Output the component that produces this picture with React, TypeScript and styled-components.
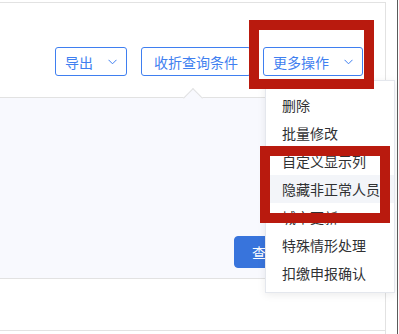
import React from "react";
import styled, { createGlobalStyle } from "styled-components";

const GlobalStyle = createGlobalStyle`
  html, body {
    margin: 0;
    padding: 0;
    background: #ffffff;
    font-family: "Noto Sans CJK SC", "Noto Sans", sans-serif;
  }
`;

const Page = styled.div`
  position: relative;
  width: 399px;
  height: 334px;
  overflow: hidden;
  padding-top: 2px;
  box-sizing: border-box;
`;

const Frame = styled.div`
  width: 386px;
  height: 332px;
  border-top: 1px solid #e2e2e2;
  border-right: 1px solid #e2e2e2;
  box-sizing: border-box;
  display: flex;
  flex-direction: column;
`;

const Toolbar = styled.div`
  height: 94px;
  padding: 44px 22px 0 0;
  box-sizing: border-box;
  display: flex;
  justify-content: flex-end;
  align-items: flex-start;
`;

const OutlineButton = styled.button<{ $chevron?: boolean; $gap?: number }>`
  height: 29px;
  margin-left: ${(p) => p.$gap ?? 0}px;
  padding: 0 ${(p) => (p.$chevron ? "9px" : "12px")} 0 ${(p) => (p.$chevron ? "9px" : "12px")};
  border: 1px solid #3f7ff0;
  border-radius: 3px;
  background: #ffffff;
  color: #3f7ff0;
  font-family: "Noto Sans CJK SC", sans-serif;
  font-size: 14px;
  display: flex;
  align-items: center;
  gap: 15px;
  cursor: pointer;
`;

const Chevron = () => (
  <svg width="9" height="6" viewBox="0 0 9 6" fill="none">
    <path d="M0.5 0.8 L4.5 4.8 L8.5 0.8" stroke="#3f7ff0" strokeWidth="1" />
  </svg>
);

const SearchPanel = styled.div`
  height: 182px;
  background: #f8f9fe;
  border-top: 1px solid #e2e2e2;
  border-bottom: 1px solid #e2e2e2;
  box-sizing: border-box;
  display: flex;
  justify-content: flex-end;
  align-items: flex-start;
  padding: 138px 13px 0 0;
  gap: 10px;
`;

const PanelCaret = styled.div`
  position: absolute;
  left: 186px;
  top: 91px;
  width: 13px;
  height: 13px;
  background: #f8f9fe;
  border-top: 1px solid #e2e2e2;
  border-left: 1px solid #e2e2e2;
  transform: rotate(45deg);
`;

const SolidButton = styled.button<{ $primary?: boolean }>`
  width: 64px;
  height: 32px;
  border-radius: 4px;
  border: 1px solid ${(p) => (p.$primary ? "#3874dc" : "#dcdfe6")};
  background: ${(p) => (p.$primary ? "#3874dc" : "#ffffff")};
  color: ${(p) => (p.$primary ? "#ffffff" : "#606266")};
  font-family: "Noto Sans CJK SC", sans-serif;
  font-size: 14px;
`;

const Footer = styled.div`
  height: 51px;
  border-bottom: 1px solid #e2e2e2;
`;

const Menu = styled.ul`
  position: absolute;
  left: 265px;
  top: 80px;
  width: 130px;
  height: 213px;
  margin: 0;
  padding: 10px 0 7px;
  box-sizing: border-box;
  list-style: none;
  background: #ffffff;
  border: 1px solid #e4e7ed;
  box-shadow: 0 2px 8px rgba(0, 0, 0, 0.08);
`;

const MenuItem = styled.li<{ $active?: boolean }>`
  height: 28px;
  line-height: 28px;
  padding-left: 16px;
  font-size: 14px;
  color: #303133;
  white-space: nowrap;
  background: ${(p) => (p.$active ? "#f3f5f9" : "transparent")};
`;

const Highlight = styled.div<{ $l: number; $t: number; $w: number; $h: number }>`
  position: absolute;
  left: ${(p) => p.$l}px;
  top: ${(p) => p.$t}px;
  width: ${(p) => p.$w}px;
  height: ${(p) => p.$h}px;
  border: 10px solid #b91a0e;
  box-sizing: border-box;
`;

const EdgeLine = styled.div`
  position: absolute;
  right: 1px;
  top: 0;
  width: 1px;
  height: 100%;
  background: #5a5a5a;
`;

const items = [
  "删除",
  "批量修改",
  "自定义显示列",
  "隐藏非正常人员",
  "城市更新",
  "特殊情形处理",
  "扣缴申报确认",
];

export default function App() {
  return (
    <>
      <GlobalStyle />
      <Page>
        <Frame>
          <Toolbar>
            <OutlineButton $chevron>
              导出
              <Chevron />
            </OutlineButton>
            <OutlineButton $gap={14}>收折查询条件</OutlineButton>
            <OutlineButton $chevron $gap={12}>
              更多操作
              <Chevron />
            </OutlineButton>
          </Toolbar>
          <SearchPanel>
            <SolidButton $primary>查询</SolidButton>
            <SolidButton>重置</SolidButton>
          </SearchPanel>
          <Footer />
        </Frame>
        <PanelCaret />
        <Menu>
          {items.map((t) => (
            <MenuItem key={t} $active={t === "隐藏非正常人员"}>
              {t}
            </MenuItem>
          ))}
        </Menu>
        <Highlight $l={249} $t={20} $w={125} $h={69} />
        <Highlight $l={260} $t={146} $w={130} $h={77} />
        <EdgeLine />
      </Page>
    </>
  );
}
